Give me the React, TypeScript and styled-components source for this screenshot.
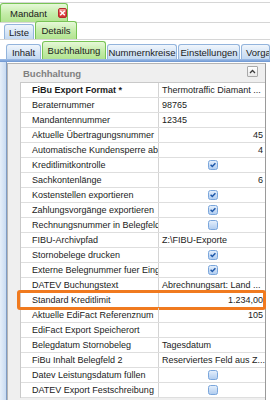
import React from 'react';
import styled, { createGlobalStyle, css } from 'styled-components';

const GlobalStyle = createGlobalStyle`
    html, body {
        margin: 0;
        padding: 0;
        background: #ffffff;
    }
    body {
        font-family: 'Liberation Sans', Arial, sans-serif;
        font-size: 9px;
        color: #1b1b1b;
    }
`;

const Screen = styled.div`
    width: 270px;
    height: 400px;
    overflow: hidden;
    display: flex;
    flex-direction: column;
    background: #ffffff;
`;

const green = css`
    background: linear-gradient(#e6f8d8, #c4eca8 55%, #b2e391);
    border: 1px solid #78c455;
`;

const blue = css`
    background: linear-gradient(#f1f6fc, #d6e5f6 55%, #c4d9f1);
    border: 1px solid #93b4dc;
`;

const TopStrip = styled.div`
    height: 20px;
    box-sizing: border-box;
    margin-top: 2px;
    border-top: 1px solid #d6d6d6;
    display: flex;
    align-items: flex-end;
    flex: none;
`;

const OuterTab = styled.div`
    ${green};
    border-bottom: none;
    border-radius: 3px 3px 0 0;
    box-sizing: border-box;
    height: 19px;
    margin-top: -1px;
    width: 68px;
    display: flex;
    align-items: center;
    padding: 0 4px 0 9px;
    gap: 11px;
    font-size: 9.5px;
`;

const CloseBtn = styled.span`
    width: 11px;
    height: 10px;
    box-sizing: border-box;
    border-radius: 2px;
    border: 1px solid #b52a2a;
    background: linear-gradient(#f7a0a0, #e04a4a 50%, #d23232);
    display: flex;
    align-items: center;
    justify-content: center;
`;

const SubStrip = styled.div`
    height: 18px;
    box-sizing: border-box;
    border-top: 1px solid #d6d6d6;
    border-bottom: 1px solid #d6d6d6;
    display: flex;
    align-items: flex-end;
    padding-left: 4px;
    gap: 1px;
    flex: none;
`;

const PageTabs = styled.div`
    height: 19px;
    display: flex;
    align-items: flex-end;
    padding-left: 6px;
    gap: 1px;
    flex: none;
`;

const Tab = styled.div<{ $active?: boolean; $w: number; $start?: boolean }>`
    ${p => (p.$active ? green : blue)};
    border-bottom: none;
    border-radius: 3px 3px 0 0;
    box-sizing: border-box;
    width: ${p => p.$w}px;
    height: ${p => (p.$active ? 18 : 15)}px;
    display: flex;
    align-items: center;
    justify-content: ${p => (p.$start ? 'flex-start' : 'center')};
    padding-left: ${p => (p.$start ? 4 : 0)}px;
    white-space: nowrap;
    overflow: hidden;
    flex: none;
    font-size: 9.5px;
`;

const BlueBand = styled.div`
    height: 3px;
    flex: none;
    background: linear-gradient(#9fbde6, #6d96d2);
`;

const Body = styled.div`
    flex: 1;
    display: flex;
    min-height: 0;
`;

const SideRail = styled.div`
    width: 6px;
    flex: none;
    background: linear-gradient(90deg, #e6eff9, #c9dbf1);
    border-right: 1px solid #7f9cc4;
`;

const Panel = styled.div`
    flex: 1;
    display: flex;
    flex-direction: column;
    margin: 1px 4px 0 0;
    background: #efefef;
    border-left: 1px solid #b4b4b4;
    border-top: 1px solid #b4b4b4;
    border-right: 1px solid #9a9a9a;
`;

const CategoryHeader = styled.div`
    height: 18px;
    flex: none;
    display: flex;
    align-items: center;
    justify-content: space-between;
    padding: 0 7px 0 15px;
    font-weight: bold;
    font-size: 9.5px;
    color: #808080;
`;

const CollapseBtn = styled.span`
    width: 11px;
    height: 11px;
    box-sizing: border-box;
    border: 1px solid #a9a9a9;
    border-radius: 1px;
    background: linear-gradient(#ffffff, #e9e9e9);
    display: flex;
    align-items: center;
    justify-content: center;
    margin-top: -3px;
`;

const Grid = styled.div`
    margin-left: 12px;
    background: #ffffff;
    border-top: 1px solid #c9c9c9;
    border-left: 1px solid #c9c9c9;
`;

const Row = styled.div<{ $highlight?: boolean }>`
    position: relative;
    display: grid;
    grid-template-columns: 138px 1fr;
    height: 15px;
    box-sizing: border-box;
    border-bottom: 1px solid #dedede;
    line-height: 14px;

    ${p =>
        p.$highlight &&
        css`
            &::after {
                content: '';
                position: absolute;
                top: -3px;
                bottom: -3px;
                left: -4px;
                right: -1px;
                border: 3px solid #f07a1f;
                border-radius: 3px;
            }
        `}
`;

const Label = styled.div<{ $bold?: boolean }>`
    padding-left: 11px;
    border-right: 1px solid #d4d4d4;
    white-space: nowrap;
    overflow: hidden;
    font-weight: ${p => (p.$bold ? 'bold' : 'normal')};
`;

const Value = styled.div<{ $align: 'left' | 'right' | 'center' }>`
    padding: 0 2px 0 3px;
    white-space: nowrap;
    overflow: hidden;
    display: flex;
    align-items: center;
    justify-content: ${p => (p.$align === 'right' ? 'flex-end' : p.$align === 'center' ? 'center' : 'flex-start')};
`;

const Check = ({ checked }: { checked: boolean }) => (
    <svg width="10" height="10" viewBox="0 0 10 10">
        <defs>
            <linearGradient id="cbg" x1="0" y1="0" x2="0" y2="1">
                <stop offset="0" stopColor="#e6f0fc" />
                <stop offset="1" stopColor="#aecbef" />
            </linearGradient>
        </defs>
        <rect x="0.5" y="0.5" width="9" height="9" rx="2" fill="url(#cbg)" stroke="#7aa6dc" />
        {checked && <path d="M2.6 4.8 L4.3 6.5 L7.4 3.2" fill="none" stroke="#1e58aa" strokeWidth="1.5" />}
    </svg>
);

type Cell =
    | { kind: 'text'; value: string }
    | { kind: 'num'; value: string }
    | { kind: 'check'; value: boolean };

interface Prop {
    label: string;
    cell: Cell;
    bold?: boolean;
    highlight?: boolean;
}

const props: Prop[] = [
    { label: 'FiBu Export Format *', bold: true, cell: { kind: 'text', value: 'Thermotraffic Diamant ...' } },
    { label: 'Beraternummer', cell: { kind: 'text', value: '98765' } },
    { label: 'Mandantennummer', cell: { kind: 'text', value: '12345' } },
    { label: 'Aktuelle Übertragungsnummer', cell: { kind: 'num', value: '45' } },
    { label: 'Automatische Kundensperre ab', cell: { kind: 'num', value: '4' } },
    { label: 'Kreditlimitkontrolle', cell: { kind: 'check', value: true } },
    { label: 'Sachkontenlänge', cell: { kind: 'num', value: '6' } },
    { label: 'Kostenstellen exportieren', cell: { kind: 'check', value: true } },
    { label: 'Zahlungsvorgänge exportieren', cell: { kind: 'check', value: true } },
    { label: 'Rechnungsnummer in Belegfeld', cell: { kind: 'check', value: false } },
    { label: 'FIBU-Archivpfad', cell: { kind: 'text', value: 'Z:\\FIBU-Exporte' } },
    { label: 'Stornobelege drucken', cell: { kind: 'check', value: true } },
    { label: 'Externe Belegnummer fuer Eing', cell: { kind: 'check', value: true } },
    { label: 'DATEV Buchungstext', cell: { kind: 'text', value: 'Abrechnungsart: Land ...' } },
    { label: 'Standard Kreditlimit', highlight: true, cell: { kind: 'num', value: '1.234,00' } },
    { label: 'Aktuelle EdiFact Referenznum', cell: { kind: 'num', value: '105' } },
    { label: 'EdiFact Export Speicherort', cell: { kind: 'text', value: '' } },
    { label: 'Belegdatum Stornobeleg', cell: { kind: 'text', value: 'Tagesdatum' } },
    { label: 'FiBu Inhalt Belegfeld 2', cell: { kind: 'text', value: 'Reserviertes Feld aus Z...' } },
    { label: 'Datev Leistungsdatum füllen', cell: { kind: 'check', value: false } },
    { label: 'DATEV Export Festschreibung', cell: { kind: 'check', value: false } },
];

const renderCell = (cell: Cell) => {
    if (cell.kind === 'check') {
        return (
            <Value $align="center">
                <Check checked={cell.value} />
            </Value>
        );
    }
    return <Value $align={cell.kind === 'num' ? 'right' : 'left'}>{cell.value}</Value>;
};

export default function App() {
    return (
        <Screen>
            <GlobalStyle />
            <TopStrip>
                <OuterTab>
                    Mandant
                    <CloseBtn>
                        <svg width="7" height="6" viewBox="0 0 7 6">
                            <path d="M1.2 0.8 L5.8 5.2 M5.8 0.8 L1.2 5.2" stroke="#ffffff" strokeWidth="1.5" />
                        </svg>
                    </CloseBtn>
                </OuterTab>
            </TopStrip>
            <SubStrip>
                <Tab $w={30}>Liste</Tab>
                <Tab $w={42} $active>
                    Details
                </Tab>
            </SubStrip>
            <PageTabs>
                <Tab $w={35}>Inhalt</Tab>
                <Tab $w={64} $active>
                    Buchhaltung
                </Tab>
                <Tab $w={70}>Nummernkreise</Tab>
                <Tab $w={62}>Einstellungen</Tab>
                <Tab $w={29} $start>
                    Vorga
                </Tab>
            </PageTabs>
            <BlueBand />
            <Body>
                <SideRail />
                <Panel>
                    <CategoryHeader>
                        Buchhaltung
                        <CollapseBtn>
                            <svg width="7" height="5" viewBox="0 0 7 5">
                                <path d="M1 4 L3.5 1.5 L6 4" fill="none" stroke="#3c3c3c" strokeWidth="1.3" />
                            </svg>
                        </CollapseBtn>
                    </CategoryHeader>
                    <Grid>
                        {props.map(p => (
                            <Row key={p.label} $highlight={p.highlight}>
                                <Label $bold={p.bold}>{p.label}</Label>
                                {renderCell(p.cell)}
                            </Row>
                        ))}
                    </Grid>
                </Panel>
            </Body>
        </Screen>
    );
}
